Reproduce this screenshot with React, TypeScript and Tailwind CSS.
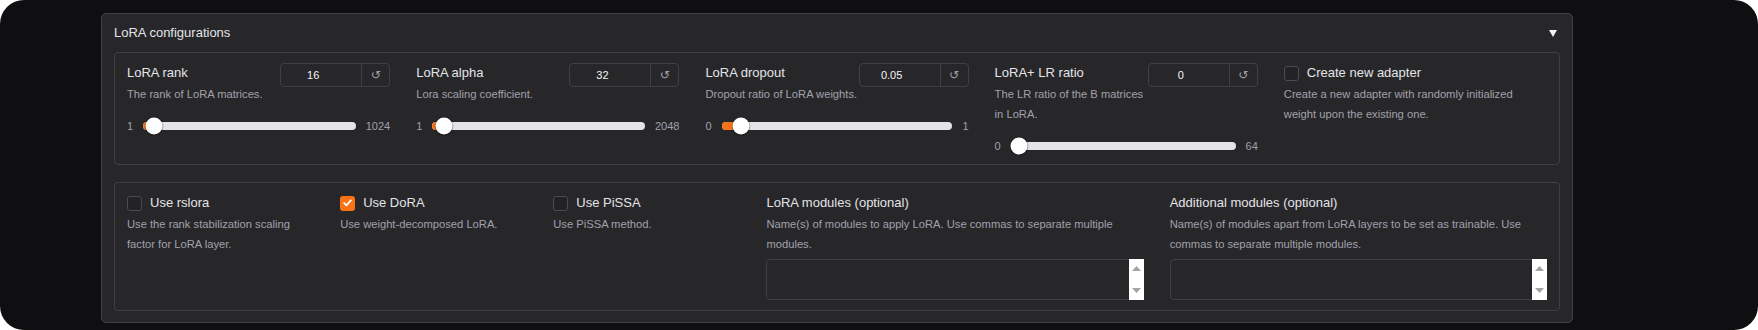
import React from "react";

function NumberBox({ value }: { value: string }) {
  return (
    <div className="flex h-[24px] w-[110px] shrink-0 rounded-[4px] border border-[#3f3f46]">
      <div className="flex flex-1 items-center justify-center pr-[16px] text-[11px] text-[#f4f4f5]">
        {value}
      </div>
      <div className="flex w-[28px] items-center justify-center border-l border-[#3f3f46] font-['DejaVu_Sans',sans-serif] text-[12px] text-[#a1a1aa]">
        ↺
      </div>
    </div>
  );
}

function Slider({ min, max, frac }: { min: string; max: string; frac: number }) {
  const pos = `calc(8.5px + ${frac} * (100% - 17px))`;
  return (
    <div className="flex h-[20px] items-center gap-[10px] text-[11px] text-[#a1a1aa]">
      <span>{min}</span>
      <div className="relative h-[8px] flex-1 rounded-full bg-[#e4e4e7]">
        <div className="absolute left-0 top-0 h-full rounded-l-full bg-[#f97316]" style={{ width: pos }} />
        <div
          className="absolute top-1/2 h-[17px] w-[17px] -translate-x-1/2 -translate-y-1/2 rounded-full bg-white shadow-[0_0_0_1px_rgba(0,0,0,0.18),0_1px_2px_rgba(0,0,0,0.3)]"
          style={{ left: pos }}
        />
      </div>
      <span>{max}</span>
    </div>
  );
}

function SliderCol({
  label,
  info,
  value,
  min,
  max,
  frac,
}: {
  label: string;
  info: React.ReactNode;
  value: string;
  min: string;
  max: string;
  frac: number;
}) {
  return (
    <div className="flex flex-col">
      <div className="flex items-start justify-between">
        <div className="flex flex-col">
          <div className="whitespace-nowrap text-[13px] leading-[20px] text-[#e4e4e7]">{label}</div>
          <div className="mt-[1px] whitespace-nowrap text-[11.2px] leading-[20px] text-[#a1a1aa]">{info}</div>
        </div>
        <NumberBox value={value} />
      </div>
      <div className="mt-[12px]">
        <Slider min={min} max={max} frac={frac} />
      </div>
    </div>
  );
}

function CheckBox({ checked }: { checked?: boolean }) {
  if (checked) {
    return (
      <div className="flex h-[15px] w-[15px] shrink-0 items-center justify-center rounded-[3px] bg-[#f97316]">
        <svg width="9" height="8" viewBox="0 0 9 8">
          <path d="M1.2 4.2 L3.5 6.4 L7.8 1.4" fill="none" stroke="white" strokeWidth="1.8" strokeLinecap="round" strokeLinejoin="round" />
        </svg>
      </div>
    );
  }
  return <div className="h-[15px] w-[15px] shrink-0 rounded-[3px] border border-[#4b4b52] bg-[#232326]" />;
}

function CheckCol({ label, info, checked }: { label: string; info: React.ReactNode; checked?: boolean }) {
  return (
    <div className="flex flex-col">
      <div className="flex h-[20px] items-center gap-[8px]">
        <CheckBox checked={checked} />
        <span className="whitespace-nowrap text-[13px] text-[#e4e4e7]">{label}</span>
      </div>
      <div className="mt-[1px] whitespace-nowrap text-[11.2px] leading-[20px] text-[#a1a1aa]">{info}</div>
    </div>
  );
}

function TextCol({ label, info }: { label: string; info: React.ReactNode }) {
  return (
    <div className="flex flex-col">
      <div className="whitespace-nowrap text-[13px] leading-[20px] text-[#e4e4e7]">{label}</div>
      <div className="mt-[1px] whitespace-nowrap text-[11.2px] leading-[20px] text-[#a1a1aa]">{info}</div>
      <div className="mt-[5px] flex h-[41px] rounded-[4px] border border-[#3f3f46] bg-[#27272a]">
        <div className="flex-1" />
        <div className="-my-px -mr-px flex w-[15px] flex-col items-center justify-between bg-white py-[7px]">
          <svg width="9" height="5" viewBox="0 0 9 5">
            <polygon points="4.5,0 9,5 0,5" fill="#a3a3a3" />
          </svg>
          <svg width="9" height="5" viewBox="0 0 9 5">
            <polygon points="0,0 9,0 4.5,5" fill="#a3a3a3" />
          </svg>
        </div>
      </div>
    </div>
  );
}

export default function App() {
  return (
    <div className="h-[330px] w-[1758px] bg-white font-['Liberation_Sans',Arial,sans-serif]">
      <div className="flex h-[330px] w-[1758px] flex-col rounded-[24px] bg-[#0f0f11] pl-[101px] pt-[13px]">
        <div className="flex h-[310px] w-[1472px] flex-col rounded-[5px] border border-[#3f3f46] bg-[#27272a] px-[12px] pb-[11px]">
          <div className="flex h-[38px] items-center justify-between pr-[3px]">
            <span className="text-[13px] text-[#e4e4e7]">LoRA configurations</span>
            <svg width="8" height="7" viewBox="0 0 8 7">
              <polygon points="0,0 8,0 4,7" fill="#f4f4f5" />
            </svg>
          </div>

          <div className="grid h-[113px] grid-cols-5 gap-[26px] rounded-[4px] border border-[#3f3f46] px-[12px] pt-[10px]">
            <SliderCol label="LoRA rank" info="The rank of LoRA matrices." value="16" min="1" max="1024" frac={15 / 1023} />
            <SliderCol label="LoRA alpha" info="Lora scaling coefficient." value="32" min="1" max="2048" frac={31 / 2047} />
            <SliderCol label="LoRA dropout" info="Dropout ratio of LoRA weights." value="0.05" min="0" max="1" frac={0.05} />
            <SliderCol
              label="LoRA+ LR ratio"
              info={
                <>
                  The LR ratio of the B matrices
                  <br />
                  in LoRA.
                </>
              }
              value="0"
              min="0"
              max="64"
              frac={0}
            />
            <CheckCol
              label="Create new adapter"
              info={
                <>
                  Create a new adapter with randomly initialized
                  <br />
                  weight upon the existing one.
                </>
              }
            />
          </div>

          <div className="mt-[17px] grid h-[129px] grid-cols-[187fr_187fr_187fr_377fr_377fr] gap-[26px] rounded-[4px] border border-[#3f3f46] px-[12px] pt-[10px]">
            <CheckCol
              label="Use rslora"
              info={
                <>
                  Use the rank stabilization scaling
                  <br />
                  factor for LoRA layer.
                </>
              }
            />
            <CheckCol label="Use DoRA" info="Use weight-decomposed LoRA." checked />
            <CheckCol label="Use PiSSA" info="Use PiSSA method." />
            <TextCol
              label="LoRA modules (optional)"
              info={
                <>
                  Name(s) of modules to apply LoRA. Use commas to separate multiple
                  <br />
                  modules.
                </>
              }
            />
            <TextCol
              label="Additional modules (optional)"
              info={
                <>
                  Name(s) of modules apart from LoRA layers to be set as trainable. Use
                  <br />
                  commas to separate multiple modules.
                </>
              }
            />
          </div>
        </div>
      </div>
    </div>
  );
}
